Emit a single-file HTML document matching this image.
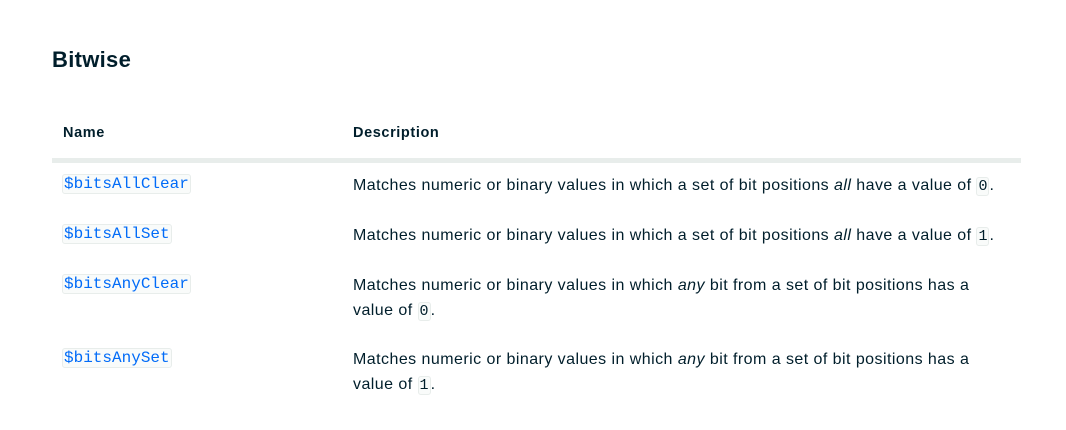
<!DOCTYPE html>
<html><head><style>
body{margin:0;background:#fff;font-family:"Liberation Sans",sans-serif;color:#1c2d38;}
h2{position:absolute;left:52px;top:47px;margin:0;font-size:22px;font-weight:bold;color:#001e2b;letter-spacing:0.3px;}
.hd{position:absolute;top:125px;font-size:14.5px;font-weight:bold;color:#001e2b;letter-spacing:0.6px;}
.line{position:absolute;left:52px;top:158px;width:969px;height:5px;background:#e8edeb;}
.n{position:absolute;left:62px;}
.d{position:absolute;left:353px;width:660px;font-size:16px;line-height:25px;color:#001e2b;letter-spacing:0.45px;}
code{font-family:"Liberation Mono",monospace;font-size:15px;letter-spacing:0;background:#f9fbfa;border:1px solid #e8edeb;border-radius:3px;padding:0 1px;}
.n code{color:#016bf8;font-size:16px;}
</style></head><body>
<h2>Bitwise</h2>
<div class="hd" style="left:63px">Name</div>
<div class="hd" style="left:353px">Description</div>
<div class="line"></div>
<div class="n" style="top:175px"><code>$bitsAllClear</code></div>
<div class="d" style="top:173px">Matches numeric or binary values in which a set of bit positions <i>all</i> have a value of <code>0</code>.</div>
<div class="n" style="top:225px"><code>$bitsAllSet</code></div>
<div class="d" style="top:223px">Matches numeric or binary values in which a set of bit positions <i>all</i> have a value of <code>1</code>.</div>
<div class="n" style="top:275px"><code>$bitsAnyClear</code></div>
<div class="d" style="top:273px">Matches numeric or binary values in which <i>any</i> bit from a set of bit positions has a<br>value of <code>0</code>.</div>
<div class="n" style="top:349px"><code>$bitsAnySet</code></div>
<div class="d" style="top:347px">Matches numeric or binary values in which <i>any</i> bit from a set of bit positions has a<br>value of <code>1</code>.</div>
</body></html>
